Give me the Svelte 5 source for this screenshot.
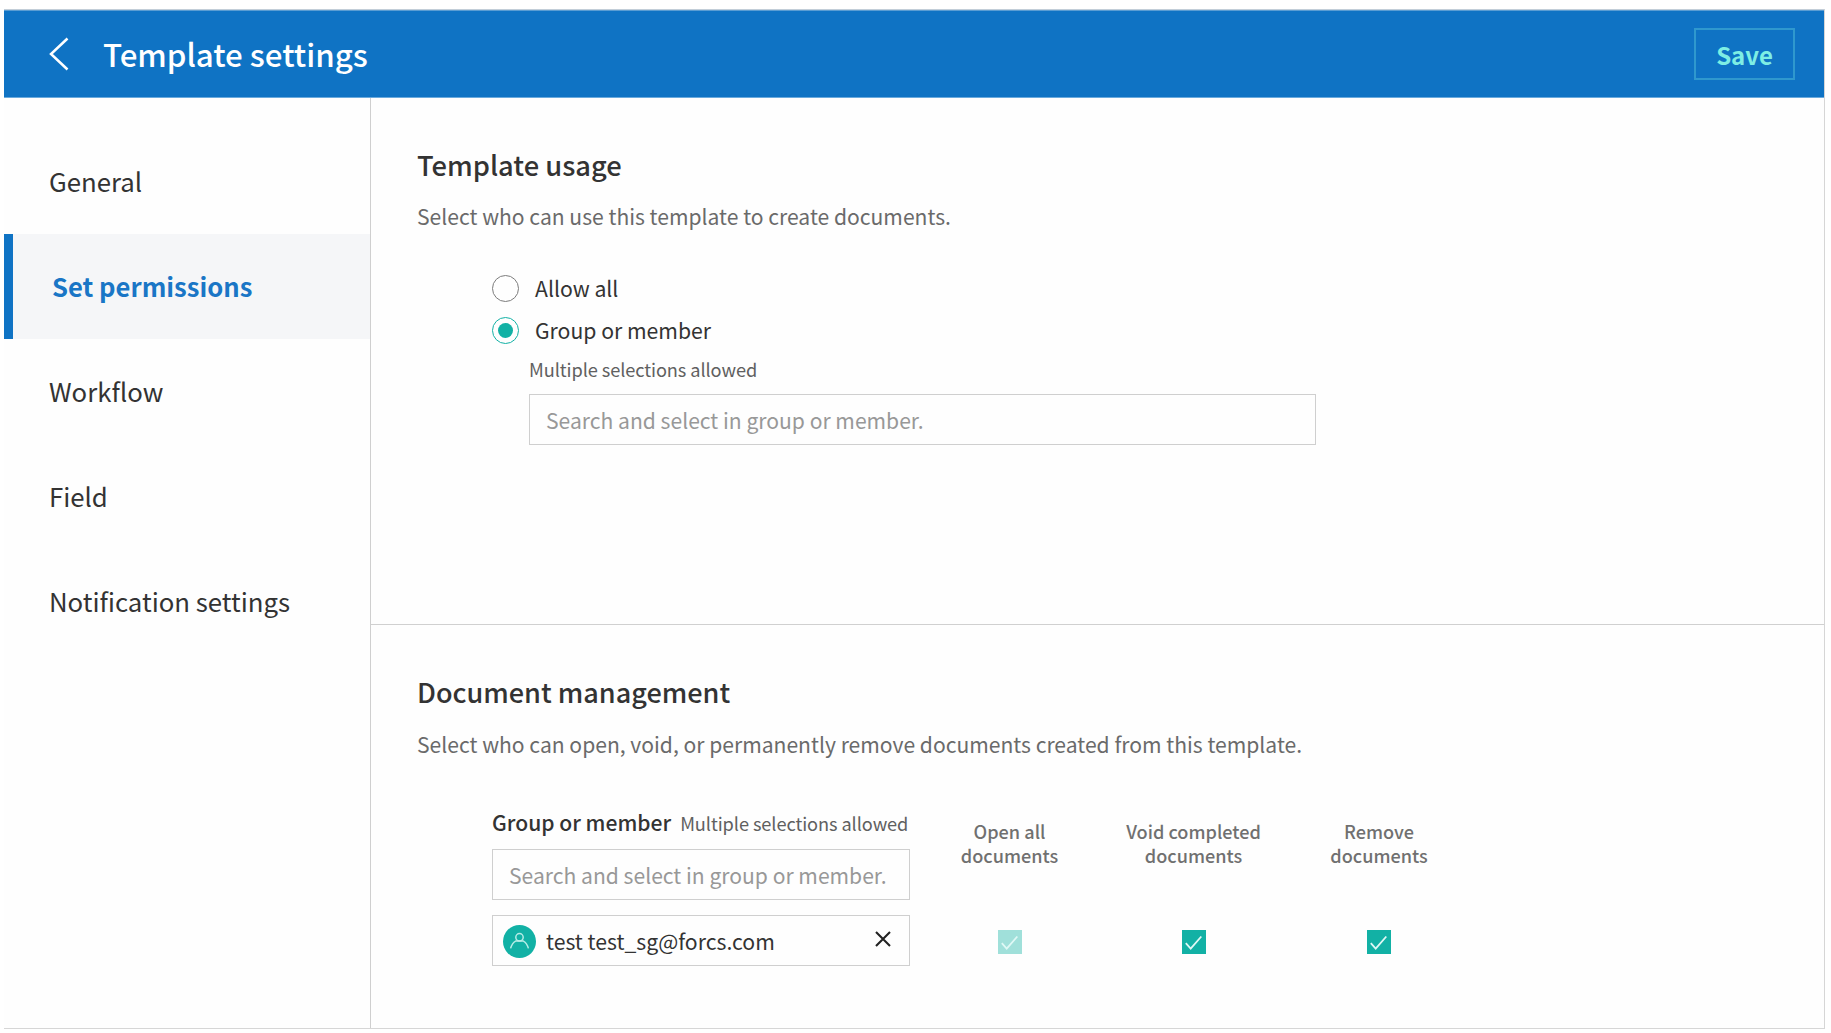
<script>
  const nav = ['General', 'Set permissions', 'Workflow', 'Field', 'Notification settings'];
  let active = $state('Set permissions');
  let usage = $state('member');
  const usageOptions = [
    { id: 'all', label: 'Allow all' },
    { id: 'member', label: 'Group or member' }
  ];
  const columns = [
    { top: 'Open all', locked: true },
    { top: 'Void completed', locked: false },
    { top: 'Remove', locked: false }
  ];
</script>

<div class="frame">
  <header>
    <svg class="back" viewBox="0 0 20 34" fill="none"><path d="M18.500 1.500 2 17l16.500 15.500" stroke="#fff" stroke-width="2.500" /></svg>
    <h1>Template settings</h1>
    <button class="save">Save</button>
  </header>

  <div class="body">
    <nav>
      {#each nav as item}
        <button class="item" class:active={item === active} onclick={() => (active = item)}>{item}</button>
      {/each}
    </nav>

    <main>
      <section class="usage">
        <h2>Template usage</h2>
        <p class="desc">Select who can use this template to create documents.</p>
        <div class="options">
          {#each usageOptions as option}
            <button class="option" onclick={() => (usage = option.id)}>
              <span class="radio" class:on={usage === option.id}></span>
              <span class="text">{option.label}</span>
            </button>
          {/each}
          <div class="nested">
            <div class="hint">Multiple selections allowed</div>
            <div class="field">Search and select in group or member.</div>
          </div>
        </div>
      </section>

      <section class="management">
        <h2>Document management</h2>
        <p class="desc">Select who can open, void, or permanently remove documents created from this template.</p>
        <div class="grid">
          <div>
            <div class="label"><strong>Group or member</strong><span class="hint">Multiple selections allowed</span></div>
            <div class="field">Search and select in group or member.</div>
          </div>
          {#each columns as column}
            <div class="colhead">{column.top}<br />documents</div>
          {/each}

          <div class="chip">
            <svg class="avatar" viewBox="0 0 33 33" fill="none">
              <circle cx="16.500" cy="16.500" r="16.500" fill="#12b1a5" />
              <g stroke="#b5ece6" stroke-width="1.500">
                <circle cx="16.500" cy="12.300" r="3.700" />
                <path d="M7.600 23.400c1-3.600 2.300-5.800 5-7.300h7.800c2.700 1.500 4 3.700 5 7.300" />
              </g>
            </svg>
            <span class="who">test test_sg@forcs.com</span>
            <svg class="remove" viewBox="0 0 16 16"><path d="M1 1l14 14M15 1L1 15" stroke="#222" stroke-width="2.100" /></svg>
          </div>
          {#each columns as column}
            <div class="cell">
              <svg class="check" class:locked={column.locked} viewBox="0 0 24 24" fill="none">
                <path d="M3.800 13.200l4.900 5.500L19.300 6.500" stroke="#dff8f5" stroke-width="1.800" />
              </svg>
            </div>
          {/each}
        </div>
      </section>
    </main>
  </div>
</div>

<style>
  :global(body) {
    margin: 0;
    background: #fff;
    font-family: 'Noto Sans CJK KR', 'Noto Sans', sans-serif;
    color: #333;
  }
  button {
    font: inherit;
    color: inherit;
    background: none;
    border: 0;
    padding: 0;
    text-align: left;
  }
  h1, h2, p { margin: 0; }
  .frame {
    box-sizing: border-box;
    width: 1821px;
    height: 1020px;
    margin: 9px 0 0 4px;
    border-top: 1px solid #c3ced8;
    border-right: 1px solid #d6d6d6;
    border-bottom: 1px solid #d6d6d6;
    display: flex;
    flex-direction: column;
    background: #fefefe;
  }
  header {
    box-sizing: border-box;
    height: 88px;
    flex: none;
    display: flex;
    align-items: center;
    background: #0f73c4;
    border-top: 1px solid #5a9dd3;
    border-bottom: 1px solid #6aaadd;
    padding: 0 29px 0 45px;
  }
  .back { width: 20px; height: 34px; }
  h1 {
    margin: 0 0 1px 34px;
    flex: 1;
    font-size: 31.25px;
    line-height: 44px;
    font-weight: 500;
    color: #fff;
  }
  .save {
    box-sizing: border-box;
    width: 101px;
    height: 52px;
    border: 2px solid #2f98ce;
    color: #7eeee4;
    font-size: 24px;
    font-weight: 700;
    line-height: 47px;
    text-align: center;
  }
  .body { flex: 1; display: flex; }
  nav {
    box-sizing: border-box;
    width: 367px;
    padding-top: 31px;
    display: flex;
    flex-direction: column;
    border-right: 1px solid #cfcfcf;
  }
  .item {
    height: 105px;
    padding: 0 0 2px 45px;
    font-size: 25.75px;
  }
  .item.active {
    padding-left: 39px;
    border-left: 9px solid #0f73c4;
    background: #f5f6f8;
    color: #1a76c6;
    font-size: 25.6px;
    font-weight: 700;
  }
  main { flex: 1; }
  section { box-sizing: border-box; padding-left: 46px; }
  .usage { height: 527px; padding-top: 50px; border-bottom: 1px solid #d0d0d0; }
  .management { padding-top: 51px; }
  h2 { font-size: 27.3px; line-height: 32px; font-weight: 500; }
  .management h2 { font-size: 27.05px; }
  .desc { margin-top: 21px; font-size: 21.1px; line-height: 30px; color: #6a6a6a; }
  .options { padding: 36px 0 0 75px; }
  .option {
    height: 42px;
    display: flex;
    align-items: center;
    gap: 16px;
    font-size: 21.2px;
  }
  .option .text { padding-bottom: 2px; }
  .radio {
    box-sizing: border-box;
    width: 27px;
    height: 27px;
    border: 1.5px solid #7c7c7c;
    border-radius: 50%;
    display: grid;
    place-items: center;
  }
  .radio.on { border-color: #12b1a5; }
  .radio.on::after {
    content: '';
    width: 15px;
    height: 15px;
    border-radius: 50%;
    background: #12b1a5;
  }
  .nested { padding: 6px 0 0 37px; }
  .hint { font-size: 18.2px; line-height: 24px; letter-spacing: -0.08px; color: #606060; }
  .field {
    box-sizing: border-box;
    width: 418px;
    height: 51px;
    border: 1px solid #cfcfcf;
    padding-left: 16px;
    font-size: 21.1px;
    line-height: 50px;
    color: #989898;
  }
  .nested .field { width: 787px; margin-top: 13px; }
  .grid {
    display: grid;
    grid-template-columns: 418px 199px 169px 202px;
    row-gap: 15px;
    padding: 48px 0 0 75px;
  }
  .label {
    display: flex;
    align-items: baseline;
    gap: 9px;
    height: 42px;
    line-height: 30px;
    white-space: nowrap;
  }
  strong { font-size: 21.1px; font-weight: 500; }
  .colhead {
    padding-top: 12px;
    font-size: 18.1px;
    line-height: 24px;
    font-weight: 500;
    text-align: center;
    color: #707070;
  }
  .chip {
    box-sizing: border-box;
    height: 51px;
    border: 1px solid #cfcfcf;
    padding: 0 18px 0 10px;
    display: flex;
    align-items: center;
    font-size: 21.2px;
  }
  .avatar { width: 33px; height: 33px; margin-top: 2px; }
  .who { flex: 1; margin-left: 10px; }
  .remove { width: 16px; height: 16px; margin-bottom: 3px; }
  .cell { display: grid; place-items: center; padding-top: 3px; }
  .check { width: 24px; height: 24px; background: #12b1a5; }
  .check.locked { background: #a0e0da; }
</style>
